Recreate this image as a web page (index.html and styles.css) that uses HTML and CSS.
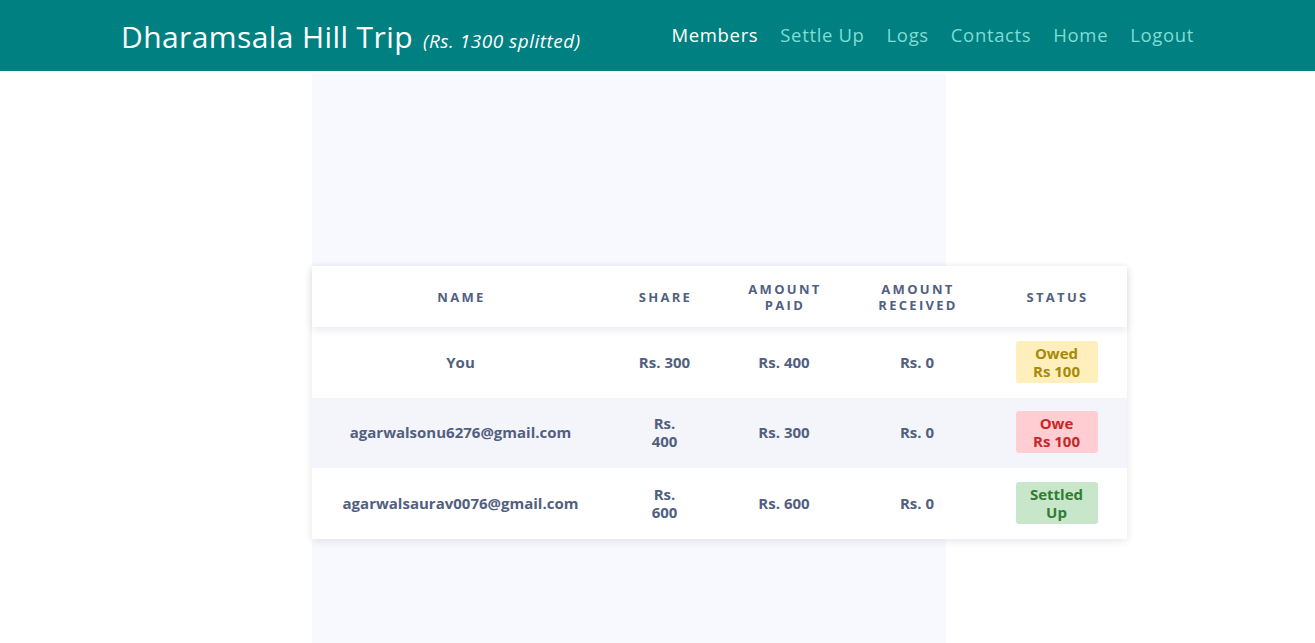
FILE: index.html
```html
<!DOCTYPE html>
<html lang="en">
<head>
<meta charset="utf-8">
<title>Dharamsala Hill Trip</title>
<link rel="stylesheet" href="styles.css">
</head>
<body>
<header class="topbar">
  <div class="brand">Dharamsala Hill Trip <span class="brand-sub">(Rs. 1300 splitted)</span></div>
  <nav class="nav">
    <a class="nav-link active" href="#">Members</a>
    <a class="nav-link" href="#">Settle Up</a>
    <a class="nav-link" href="#">Logs</a>
    <a class="nav-link" href="#">Contacts</a>
    <a class="nav-link" href="#">Home</a>
    <a class="nav-link" href="#">Logout</a>
  </nav>
</header>
<main class="panel">
  <div class="tbl">
    <div class="tr thead">
      <div class="th">Name</div>
      <div class="th">Share</div>
      <div class="th">Amount<br>Paid</div>
      <div class="th">Amount<br>Received</div>
      <div class="th">Status</div>
    </div>
    <div class="tr">
      <div class="td">You</div>
      <div class="td">Rs. 300</div>
      <div class="td">Rs. 400</div>
      <div class="td">Rs. 0</div>
      <div class="td"><span class="badge owed">Owed<br>Rs 100</span></div>
    </div>
    <div class="tr alt">
      <div class="td">agarwalsonu6276@gmail.com</div>
      <div class="td">Rs.<br>400</div>
      <div class="td">Rs. 300</div>
      <div class="td">Rs. 0</div>
      <div class="td"><span class="badge owe">Owe<br>Rs 100</span></div>
    </div>
    <div class="tr">
      <div class="td">agarwalsaurav0076@gmail.com</div>
      <div class="td">Rs.<br>600</div>
      <div class="td">Rs. 600</div>
      <div class="td">Rs. 0</div>
      <div class="td"><span class="badge settled">Settled<br>Up</span></div>
    </div>
  </div>
</main>
</body>
</html>
```
FILE: styles.css
```css
html, body {
  margin: 0;
  padding: 0;
  background: #ffffff;
  font-family: "Open Sans", "DejaVu Sans", sans-serif;
}

.topbar {
  height: 71px;
  background: #008080;
  display: flex;
  align-items: center;
  justify-content: space-between;
  padding: 0 121px;
  box-sizing: border-box;
}

.brand {
  color: #ffffff;
  font-size: 30px;
  font-weight: 400;
  letter-spacing: 0.4px;
  padding-top: 1px;
}

.brand-sub {
  font-size: 19px;
  font-style: italic;
  letter-spacing: 0.5px;
  margin-left: 2px;
}

.nav {
  display: flex;
  gap: 22px;
  margin-top: -2px;
}

.nav-link {
  color: #7fdcd6;
  font-size: 18.5px;
  letter-spacing: 0.65px;
  text-decoration: none;
}

.nav-link.active {
  color: #ffffff;
}

.panel {
  margin: 3px 0 0 312px;
  width: 634px;
  min-height: 569px;
  background: #f8f9fe;
  padding-top: 192px;
  box-sizing: border-box;
}

.tbl {
  width: 815px;
  background: #ffffff;
  box-shadow: 0 2px 8px rgba(50, 50, 93, 0.12);
  color: #525f7f;
}

.tr {
  display: grid;
  grid-template-columns: 297px 111px 128px 138px 141px;
  height: 71px;
  align-items: center;
  text-align: center;
  padding-bottom: 2px;
  box-sizing: border-box;
}

.tr.alt {
  background: #f4f5fa;
  height: 70px;
}

.thead {
  height: 61px;
  padding-bottom: 0;
  position: relative;
  z-index: 1;
  box-shadow: 0 3px 8px rgba(50, 50, 93, 0.1);
  background: #ffffff;
}

.th {
  font-size: 13px;
  font-weight: 700;
  letter-spacing: 2.3px;
  text-transform: uppercase;
  line-height: 16px;
  color: #525f7f;
  padding-left: 2px;
}

.td {
  font-size: 15px;
  font-weight: 700;
  line-height: 18px;
}

.badge {
  display: inline-block;
  width: 82px;
  padding: 3px 0;
  border-radius: 3px;
  font-size: 15px;
  line-height: 18px;
  font-weight: 700;
}

.badge.owed {
  background: #feefbd;
  color: #a78a06;
}

.badge.owe {
  background: #ffcdd2;
  color: #c62828;
}

.badge.settled {
  background: #c8e6c9;
  color: #2e7d32;
}
```
